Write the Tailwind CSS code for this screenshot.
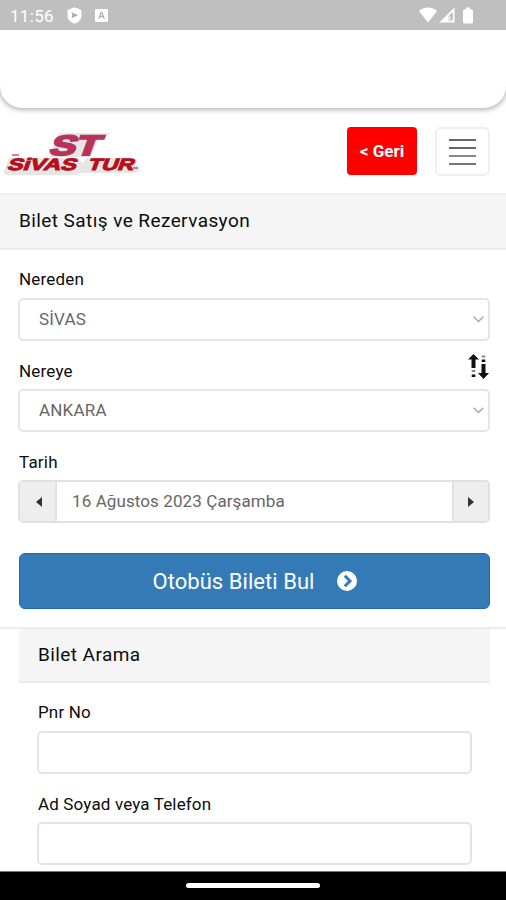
<!DOCTYPE html>
<html lang="tr">
<head>
<meta charset="utf-8">
<meta name="viewport" content="width=device-width, initial-scale=1">
<title>Sivas Tur</title>
<script src="https://cdn.jsdelivr.net/npm/@tailwindcss/browser@4"></script>
</head>
<body class="bg-white font-['Roboto',sans-serif] text-[#0c0c0c]">
<div class="flex h-[900px] w-[506px] flex-col overflow-hidden bg-white">
  <div class="flex h-[30px] shrink-0 items-center bg-[#bfbfbf] pl-[10px] pr-[33px] text-white">
    <span class="w-[57px] pt-[2px] text-[17px] leading-5 tracking-[0.3px]">11:56</span>
    <svg class="h-[17px] w-[15px]" viewBox="0 0 15 17"><path d="M7.500.3 14.400 3v6.200c0 3.300-2.500 5.700-6.900 7.500C3.100 14.900.6 12.500.6 9.200V3Z" fill="#fff"/><path d="M4.500 5.300 11 8.300l-6.500 3 .8-3Z" fill="#aaa"/></svg>
    <svg class="ml-[13px] h-[13px] w-[13px]" viewBox="0 0 13 13"><rect width="13" height="13" rx="1" fill="#fff"/><path d="M3.700 9.700 6 3.500h1l2.300 6.200M5 8l1.500-1L8 8" fill="none" stroke="#aaa" stroke-width="1.100"/></svg>
    <svg class="ml-auto h-[16px] w-[18px]" viewBox="0 0 18 16"><path d="M0 4.200C2.200 1.800 5.400.5 9 .5s6.800 1.300 9 3.700L9 15.500Z" fill="#fff"/></svg>
    <svg class="ml-[2px] h-[16px] w-[16px]" viewBox="0 0 16 16"><path d="M15.500.5V15.500H.3Z" fill="#fff"/><path d="M13.800 4.800v8.700H9V9.800Z" fill="#bfbfbf"/><path d="M9 9.500h2.500v4H9Z" fill="#e8e8e8"/></svg>
    <svg class="ml-[8px] h-[17px] w-[10px]" viewBox="0 0 10 17"><path d="M3 .5h4v1.800h1.500q1.500 0 1.500 1.500v11.200q0 1.500-1.500 1.500h-7Q0 16.500 0 15V3.800q0-1.500 1.500-1.500H3Z" fill="#fff"/></svg>
  </div>

  <div class="z-10 h-[78px] shrink-0 rounded-b-[22px] bg-white shadow-[0_1px_5px_1px_rgba(0,0,0,0.3)] [clip-path:inset(0_0_-12px_0)]"></div>

  <header class="flex h-[87px] shrink-0 items-start border-b-2 border-[#efefef] bg-white pr-[16px] pt-[19px]">
    <svg class="h-[50px] w-[145px]" viewBox="0 0 145 50" font-family="Liberation Sans, Arial, sans-serif" font-weight="700">
      <path d="M50 30 57 9Q59 6 64 6H110L103 13H98L91 30ZM4 45 9 31H79l3 5 5-5H133l7 12-5 3H80l-4 2H5Z" fill="#e6e6e6"/>
      <g transform="translate(48 27.500) skewX(-20)">
        <text x="0" y="0" font-size="28" textLength="50" lengthAdjust="spacingAndGlyphs" fill="#b8325a" stroke="#b8325a" stroke-width="2">ST</text>
      </g>
      <g fill="#b90f1b" stroke="#b90f1b" stroke-width="1" font-size="16.500">
        <g transform="translate(6.500 42.500) skewX(-20)"><text x="0" y="0" textLength="69" lengthAdjust="spacingAndGlyphs">SiVAS</text></g>
        <g transform="translate(87 42.500) skewX(-20)"><text x="0" y="0" textLength="46" lengthAdjust="spacingAndGlyphs">TUR</text></g>
      </g>
      <path d="M12 28h7M133 41h5" stroke="#c95c67" stroke-width="1.500"/>
    </svg>
    <div class="ml-auto flex h-[48px] w-[70px] items-center justify-center rounded-[4px] bg-[#f00] pt-px text-[17px] font-bold text-white">&lt; Geri</div>
    <div class="ml-[18px] flex h-[49px] w-[55px] flex-col items-center justify-center gap-[6px] rounded-[6px] border-2 border-[#efefef]">
      <span class="h-[2px] w-[27px] bg-[#666]"></span><span class="h-[2px] w-[27px] bg-[#666]"></span><span class="h-[2px] w-[27px] bg-[#888]"></span><span class="h-[2px] w-[27px] bg-[#777]"></span>
    </div>
  </header>

  <section class="flex h-[434px] shrink-0 flex-col border-b-2 border-[#ececec]">
    <h1 class="flex h-[55px] items-center border-b-2 border-[#ebebeb] bg-[#f5f5f5] px-[19px] text-[19px] font-[450] tracking-[0.42px]">Bilet Satış ve Rezervasyon</h1>
    <div class="flex flex-col pl-[18px] pr-[16px] pt-[17px]">
      <label class="h-[31px] pl-px text-[17px] font-[450] leading-6 tracking-[0.2px]">Nereden</label>
      <div class="flex h-[43px] items-center justify-between rounded-[5px] border-2 border-[#e5e5e5] pl-[19px] pr-[4px] text-[17px] text-[#666]"><span class="tracking-[0.2px]">SİVAS</span><svg class="h-[7px] w-[11px]" viewBox="0 0 11 7"><path d="m.7.8 4.800 4.700L10.300.8" fill="none" stroke="#aaa" stroke-width="1.500"/></svg></div>
      <div class="flex h-[48px] items-start justify-between pl-px pt-[13px]">
        <label class="pt-[5px] text-[17px] font-[450] leading-6 tracking-[0.2px]">Nereye</label>
        <svg class="mr-px h-[25px] w-[21px]" viewBox="0 0 21 25"><path d="M5.500 0 11 5.500H7.500V14h-4V5.500H0ZM15.500 25 10 19h3.500v-9h4v9H21ZM3.700 20.500h3.600V23H3.700ZM13.700 5.500h3.600V8h-3.600Z" fill="#111"/><path d="M3.700 17h3.600M13.700 2.500h3.600" stroke="#888" stroke-width="2"/></svg>
      </div>
      <div class="flex h-[43px] items-center justify-between rounded-[5px] border-2 border-[#e5e5e5] pl-[19px] pr-[4px] text-[17px] text-[#666]"><span class="tracking-[0.2px]">ANKARA</span><svg class="h-[7px] w-[11px]" viewBox="0 0 11 7"><path d="m.7.8 4.800 4.700L10.300.8" fill="none" stroke="#aaa" stroke-width="1.500"/></svg></div>
      <label class="h-[48px] pl-px pt-[18px] text-[17px] font-[450] leading-6 tracking-[0.2px]">Tarih</label>
      <div class="flex h-[43px] rounded-[5px] border-2 border-[#e1e1e1] text-[17px] text-[#666]">
        <div class="flex w-[37px] items-center justify-center border-r-2 border-[#e1e1e1] bg-[#eee]"><svg class="ml-[2px] h-[10px] w-[6px]" viewBox="0 0 6 10"><path d="M6 0v10L0 5Z" fill="#333"/></svg></div>
        <div class="flex flex-1 items-center pl-[15px] tracking-[0.1px]">16 Ağustos 2023 Çarşamba</div>
        <div class="flex w-[36px] items-center justify-center border-l-2 border-[#e1e1e1] bg-[#eee]"><svg class="h-[10px] w-[6px]" viewBox="0 0 6 10"><path d="M0 0v10L6 5Z" fill="#333"/></svg></div>
      </div>
      <div class="mt-[30px] ml-px flex h-[56px] items-center justify-center gap-[22px] rounded-[6px] border border-[#2469a5] bg-[#337ab7] text-[22px] text-white"><span class="tracking-[0.05px]">Otobüs Bileti Bul</span><svg class="h-[20px] w-[20px]" viewBox="0 0 20 20"><circle cx="10" cy="10" r="10" fill="#fff"/><path d="m7.800 4.800 5.200 5.200-5.200 5.200" fill="none" stroke="#337ab7" stroke-width="3"/></svg></div>
    </div>
  </section>

  <section class="flex h-[242px] shrink-0 flex-col pl-[19px] pr-[16px]">
    <h2 class="flex h-[54px] items-center border-b-2 border-[#ebebeb] bg-[#f5f5f5] px-[19px] text-[19px] font-[450] tracking-[0.42px]">Bilet Arama</h2>
    <div class="flex flex-col px-[18px] pt-[17px]">
      <label class="h-[31px] pl-px text-[17px] font-[450] leading-6 tracking-[0.15px]">Pnr No</label>
      <div class="h-[43px] rounded-[5px] border-2 border-[#e4e4e4]"></div>
      <label class="h-[48px] pl-px pt-[18px] text-[17px] font-[450] leading-6 tracking-[0.15px]">Ad Soyad veya Telefon</label>
      <div class="h-[43px] rounded-[5px] border-2 border-[#e4e4e4]"></div>
    </div>
  </section>

  <footer class="flex h-[29px] shrink-0 justify-center border-t border-[#777] bg-black pt-[11px]"><div class="h-[5px] w-[134px] rounded-full bg-white"></div></footer>
</div>
</body>
</html>
